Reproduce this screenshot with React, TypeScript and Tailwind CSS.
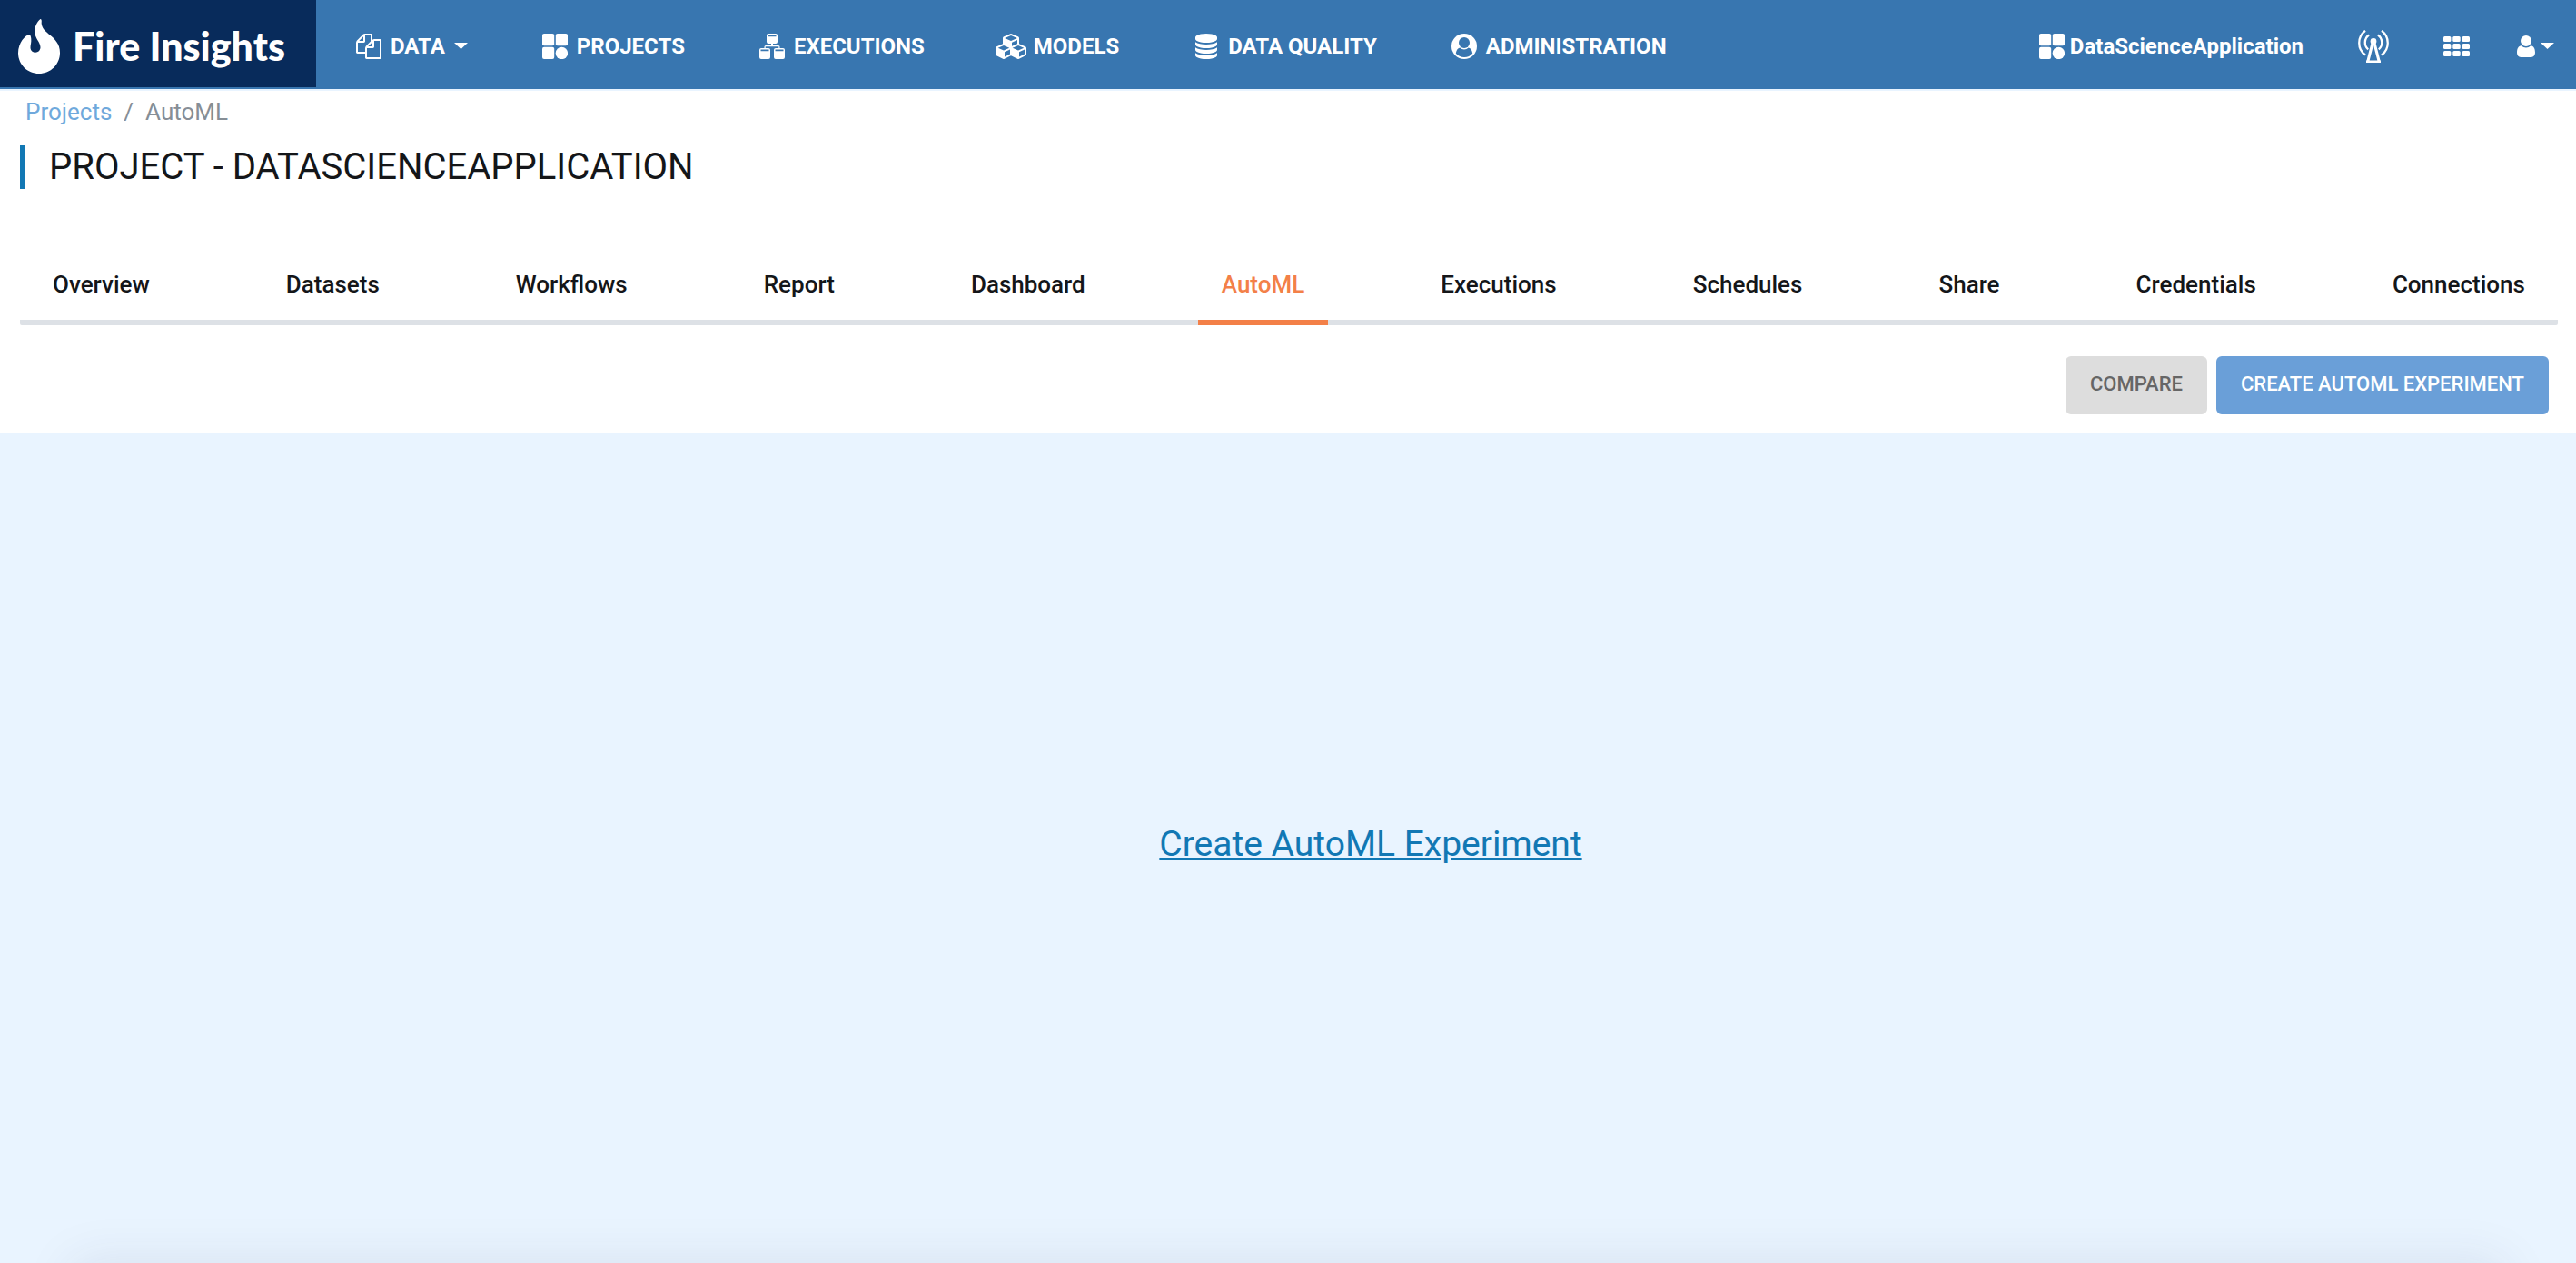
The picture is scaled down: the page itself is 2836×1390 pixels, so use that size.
import type { ReactNode } from 'react';

function CopyIcon() {
  return (
    <svg className="h-7 w-7" viewBox="0 0 1792 1792" fill="currentColor" aria-hidden="true">
      <path d="M1696 384q40 0 68 28t28 68v1216q0 40-28 68t-68 28h-960q-40 0-68-28t-28-68v-288h-544q-40 0-68-28t-28-68v-672q0-40 20-88t48-76l408-408q28-28 76-48t88-20h416q40 0 68 28t28 68v328q68-40 128-40h416zm-544 213l-299 299h299v-299zm-640-384l-299 299h299v-299zm196 647l316-316v-416h-384v416q0 40-28 68t-68 28h-416v640h512v-256q0-40 20-88t48-76zm956 804v-1152h-384v416q0 40-28 68t-68 28h-416v640h896z" />
    </svg>
  );
}

function TilesIcon() {
  return (
    <svg className="h-7 w-7" viewBox="0 0 28 28" fill="currentColor" aria-hidden="true">
      <rect x="0" y="0" width="13.2" height="13.2" rx="2" />
      <rect x="14.8" y="0" width="13.2" height="13.2" rx="2" />
      <rect x="0" y="14.8" width="13.2" height="13.2" rx="2" />
      <circle cx="21.4" cy="21.4" r="6.7" />
    </svg>
  );
}

function NetworkIcon() {
  return (
    <svg className="h-7 w-7" viewBox="0 0 28 28" fill="currentColor" aria-hidden="true">
      <path
        fillRule="evenodd"
        d="M10 0h8q2 0 2 2v7q0 2-2 2h-3v2h6q1.500 0 1.500 1.500V16H26q2 0 2 2v8q0 2-2 2h-8q-2 0-2-2v-8q0-2 2-2h3.300v-1.700H6.700V16H10q2 0 2 2v8q0 2-2 2H2q-2 0-2-2v-8q0-2 2-2h3.500v-1.500Q5.500 13 7 13h6v-2h-3q-2 0-2-2V2q0-2 2-2zM9.500 1.600v1.700h9V1.600zM1.500 17.600v1.700h9v-1.700zM17.500 17.600v1.700h9v-1.700z"
      />
    </svg>
  );
}

function CubesIcon() {
  return (
    <svg className="h-7 w-9 shrink-0" viewBox="0 0 2304 1792" fill="currentColor" aria-hidden="true">
      <path d="M640 1632l384-192v-314l-384 164v342zm-64-454l404-173-404-173-404 173zm1088 454l384-192v-314l-384 164v342zm-64-454l404-173-404-173-404 173zm-448-293l384-165v-266l-384 164v267zm-64-379l441-189-441-189-441 189zm1088 518v416q0 36-19 67t-52 47l-448 224q-25 14-57 14t-57-14l-448-224q-4-2-7-4-2 2-7 4l-448 224q-25 14-57 14t-57-14l-448-224q-33-16-52-47t-19-67v-416q0-38 21.500-70t56.500-48l434-186v-400q0-38 21.500-70t56.500-48l448-192q23-10 50-10t50 10l448 192q35 16 56.500 48t21.500 70v400l434 186q36 16 57 48t21 70z" />
    </svg>
  );
}

function DatabaseIcon() {
  return (
    <svg className="h-7 w-6" viewBox="128 0 1536 1792" fill="currentColor" aria-hidden="true">
      <path d="M896 768q237 0 443-43t325-127v170q0 69-103 128t-280 93.500-385 34.500-385-34.500-280-93.500-103-128v-170q119 84 325 127t443 43zm0 768q237 0 443-43t325-127v170q0 69-103 128t-280 93.500-385 34.500-385-34.500-280-93.500-103-128v-170q119 84 325 127t443 43zm0-384q237 0 443-43t325-127v170q0 69-103 128t-280 93.500-385 34.500-385-34.500-280-93.500-103-128v-170q119 84 325 127t443 43zm0-1152q208 0 385 34.500t280 93.500 103 128v128q0 69-103 128t-280 93.500-385 34.500-385-34.500-280-93.500-103-128v-128q0-69 103-128t280-93.500 385-34.500z" />
    </svg>
  );
}

function UserCircleIcon() {
  return (
    <svg className="h-7 w-7" viewBox="0 0 28 28" aria-hidden="true">
      <circle cx="14" cy="14" r="14" fill="currentColor" />
      <path
        d="M14 26c-3.700 0-7-1.600-9.200-4.200.5-3.300 1.900-5.800 4.500-6.300a6.800 6.800 0 0 0 9.400 0c2.600.5 4 3 4.500 6.300A12 12 0 0 1 14 26z"
        className="fill-[#3876b0]"
      />
      <circle cx="14" cy="10" r="6" className="fill-[#3876b0]" />
    </svg>
  );
}

function TowerIcon() {
  return (
    <svg className="h-9 w-[34px]" viewBox="0 0 34 36" fill="none" stroke="currentColor" aria-hidden="true">
      <path d="M8 .8C-1 7.500-1 21 8 27.500M26 .8c9 6.700 9 20 0 26.700" strokeWidth="2.300" />
      <path d="M12 5.500c-5.500 4-5.500 12-.8 15.800M22 5.500c5.500 4 5.500 12 .8 15.800" strokeWidth="2.300" />
      <circle cx="17" cy="12.500" r="3.400" fill="currentColor" stroke="none" />
      <path d="M16 14.500 10.700 35M18 14.500 23.300 35M9 35h16" strokeWidth="3" />
    </svg>
  );
}

function GridIcon() {
  return (
    <svg className="h-[22px] w-[29px]" viewBox="0 0 29 22" fill="currentColor" aria-hidden="true">
      {[0, 8, 16].map((y) =>
        [0, 10.3, 20.6].map((x) => <rect key={`${x}-${y}`} x={x} y={y} width="8.400" height="6" rx="1.500" />),
      )}
    </svg>
  );
}

function UserIcon() {
  return (
    <svg className="h-6 w-5" viewBox="0 0 20 24" fill="currentColor" aria-hidden="true">
      <circle cx="10" cy="6" r="6" />
      <path d="M4.800 11.200a7.300 7.300 0 0 0 10.400 0c3.500.3 4.800 3.600 4.800 7.600 0 3-1.700 5.200-4.300 5.200H4.300C1.700 24 0 21.800 0 18.800c0-4 1.300-7.300 4.800-7.600z" />
    </svg>
  );
}

function Caret() {
  return (
    <svg className="h-[7px] w-[15px]" viewBox="0 0 15 7" fill="currentColor" aria-hidden="true">
      <path d="M0 0h15L7.500 7z" />
    </svg>
  );
}

function Flame() {
  return (
    <svg className="h-[60px] w-[46px]" viewBox="0 0 46 60" fill="currentColor" aria-hidden="true">
      <path d="M24.500 0C20.500 3 18 9 18.200 14.500 18.500 21 24.500 25.500 24.500 31c0 3.500-2.500 5.700-5.500 5.700s-5.500-2.200-5.500-5.500c0-3 1.200-5.500.8-9.500-.2-2.500-.8-4.500-2-4.700C8 17.500 0 26 0 37.200 0 50 10.300 60 23 60s23-10 23-23c0-9.500-5.500-15-11-19.500-4.500-3.700-8.300-6.500-9.200-12C25.500 3.500 26.500.5 24.500 0z" />
    </svg>
  );
}

function IconSlot({ children }: { children: ReactNode }) {
  return <span className="flex h-7 w-7 shrink-0 items-center justify-center">{children}</span>;
}

const navItems: { label: string; icon: ReactNode; menu?: boolean }[] = [
  { label: 'DATA', icon: <CopyIcon />, menu: true },
  { label: 'PROJECTS', icon: <TilesIcon /> },
  { label: 'EXECUTIONS', icon: <NetworkIcon /> },
  { label: 'MODELS', icon: <CubesIcon /> },
  { label: 'DATA QUALITY', icon: <DatabaseIcon /> },
  { label: 'ADMINISTRATION', icon: <UserCircleIcon /> },
];

const tabs = [
  'Overview',
  'Datasets',
  'Workflows',
  'Report',
  'Dashboard',
  'AutoML',
  'Executions',
  'Schedules',
  'Share',
  'Credentials',
  'Connections',
];

export default function App() {
  return (
    <div className="flex min-h-screen flex-col bg-white font-['Roboto',sans-serif] text-[#141619]">
      <header className="flex h-[100px] items-stretch border-b-2 border-[#e9f4ff] bg-[#3876b0] text-white">
        <a href="#home" className="mb-[2px] flex w-[348px] items-center gap-[14px] bg-[#082b5b] pt-[6px] pl-5">
          <Flame />
          <span className="font-['Lato',sans-serif] text-[43px] leading-[60px] font-black whitespace-nowrap">
            Fire Insights
          </span>
        </a>
        <nav aria-label="Main" className="flex flex-1 items-center gap-[82px] pt-[3px] pl-11">
          {navItems.map(({ label, icon, menu }) =>
            menu ? (
              <button key={label} type="button" className="flex items-center gap-[10px] text-2xl font-bold">
                <IconSlot>{icon}</IconSlot>
                <span>{label}</span>
                <Caret />
              </button>
            ) : (
              <a key={label} href="#nav" className="flex items-center gap-[10px] text-2xl font-bold whitespace-nowrap">
                <IconSlot>{icon}</IconSlot>
                <span>{label}</span>
              </a>
            ),
          )}
        </nav>
        <div className="flex items-center gap-[60px] pt-[3px] pr-6">
          <a href="#project" className="flex items-center gap-[6px] text-2xl font-bold">
            <TilesIcon />
            <span>DataScienceApplication</span>
          </a>
          <button type="button" aria-label="Notifications">
            <TowerIcon />
          </button>
          <div className="flex items-center gap-[52px]">
            <button type="button" aria-label="Apps">
              <GridIcon />
            </button>
            <button type="button" aria-label="Account" className="flex items-center gap-[6px]">
              <UserIcon />
              <Caret />
            </button>
          </div>
        </div>
      </header>

      <nav aria-label="Breadcrumb" className="flex gap-[13px] px-7 pt-1 text-[26px] leading-[39px]">
        <a href="#projects" className="text-[#6fa9dc]">
          Projects
        </a>
        <span className="text-[#868e96]">/</span>
        <span className="text-[#868e96]">AutoML</span>
      </nav>

      <h1 className="mt-[17px] ml-[22px] border-l-[6px] border-[#1278b4] pl-[26px] text-[40px] leading-[48px]">
        PROJECT - DATASCIENCEAPPLICATION
      </h1>

      <nav
        aria-label="Project"
        className="mt-[86px] mr-5 ml-[22px] flex justify-between rounded-[2px] border-b-[6px] border-[#dde1e6] px-[10px]"
      >
        {tabs.map((tab) =>
          tab === 'AutoML' ? (
            <a
              key={tab}
              href="#tab"
              aria-current="page"
              className="-mb-[6px] border-b-[6px] border-[#f38048] px-[26px] pb-[19px] text-[26px] leading-[39px] font-medium text-[#f38048]"
            >
              {tab}
            </a>
          ) : (
            <a key={tab} href="#tab" className="px-[26px] pb-[19px] text-[26px] leading-[39px] font-medium">
              {tab}
            </a>
          ),
        )}
      </nav>

      <div className="flex justify-end gap-[10px] pt-[34px] pr-[30px] pb-5">
        <button
          type="button"
          className="h-16 rounded-md bg-[#dddddd] px-[27px] pb-1 text-[22px] font-medium text-[#666666]"
        >
          COMPARE
        </button>
        <button type="button" className="h-16 rounded-md bg-[#6a9fd8] px-[27px] pb-1 text-[22px] font-medium text-white">
          CREATE AUTOML EXPERIMENT
        </button>
      </div>

      <main className="flex flex-1 flex-col overflow-hidden bg-[#e9f4ff]">
        <div className="flex flex-1 items-center justify-center pb-2 pl-[182px]">
          <a href="#create" className="text-[39px] leading-[60px] text-[#1278b4] underline">
            Create AutoML Experiment
          </a>
        </div>
        <div className="mx-20 -mb-40 h-40 shadow-[0_0_56px_rgba(50,50,93,0.1)]" />
      </main>
    </div>
  );
}
